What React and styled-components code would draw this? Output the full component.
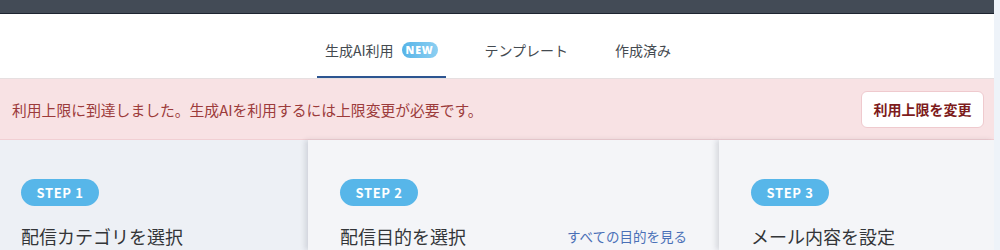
import React from 'react';
import styled, { createGlobalStyle } from 'styled-components';

const GlobalStyle = createGlobalStyle`
  html, body {
    margin: 0;
    padding: 0;
    background: #eef3f9;
    font-family: "Noto Sans CJK JP", "Noto Sans", sans-serif;
  }
  * {
    box-sizing: border-box;
  }
`;

const Page = styled.div`
  width: 994px;
  height: 250px;
  overflow: hidden;
  display: flex;
  flex-direction: column;
  background: #ffffff;
`;

const TopBar = styled.div`
  height: 14px;
  flex-shrink: 0;
  background: #434b56;
  border-bottom: 1px solid #1d2430;
`;

const TabBar = styled.nav`
  height: 65px;
  flex-shrink: 0;
  display: flex;
  justify-content: center;
  align-items: stretch;
  gap: 31px;
  background: #ffffff;
  border-bottom: 1px solid #e6dfe0;
  padding-left: 2px;
`;

const Tab = styled.div`
  display: flex;
  align-items: center;
  gap: 8px;
  padding: 10px 8px 0;
  font-size: 14px;
  color: #444a50;
  border-bottom: 2px solid ${({ $active }) => ($active ? '#2d5591' : 'transparent')};
`;

const NewBadge = styled.span`
  display: inline-flex;
  align-items: center;
  justify-content: center;
  height: 16px;
  width: 36px;
  border-radius: 8px;
  background: linear-gradient(90deg, #56b3e7, #8ccff2);
  color: #ffffff;
  font-family: "Open Sans", "Noto Sans", sans-serif;
  font-size: 10.5px;
  font-weight: 800;
  letter-spacing: 0.8px;
`;

const Alert = styled.div`
  height: 61px;
  flex-shrink: 0;
  display: flex;
  align-items: center;
  justify-content: space-between;
  padding: 0 10px 0 12px;
  background: #f8e2e4;
  border-bottom: 1px solid #f1cfd3;
`;

const AlertText = styled.p`
  margin: 0;
  font-size: 14.8px;
  color: #9c3b3b;
`;

const AlertButton = styled.button`
  height: 37px;
  width: 123px;
  border: 1px solid #efcace;
  border-radius: 6px;
  background: #ffffff;
  color: #7d1c1c;
  font-family: inherit;
  font-size: 14px;
  font-weight: 700;
  cursor: pointer;
`;

const Steps = styled.div`
  flex: 1;
  display: grid;
  grid-template-columns: 308px 411px 1fr;
  background: #f4f5f8;
`;

const StepColumn = styled.section`
  position: relative;
  z-index: ${({ $layer }) => $layer};
  background: ${({ $muted }) => ($muted ? '#edf0f5' : '#f4f5f8')};
  padding: 39px 32px 0 ${({ $muted }) => ($muted ? '21px' : '32px')};
  box-shadow: ${({ $muted }) => ($muted ? 'none' : '-3px 0 5px rgba(40, 50, 70, 0.14)')};
`;

const StepBadge = styled.span`
  display: inline-flex;
  align-items: center;
  justify-content: center;
  width: 78px;
  height: 27px;
  border-radius: 14px;
  background: #57b6e9;
  color: #ffffff;
  font-size: 13px;
  font-weight: 700;
  letter-spacing: 0.6px;
`;

const StepHeader = styled.div`
  display: flex;
  align-items: center;
  justify-content: space-between;
  margin-top: 17px;
`;

const StepTitle = styled.h2`
  margin: 0;
  font-size: 18px;
  font-weight: 400;
  color: #333538;
`;

const StepLink = styled.a`
  font-size: 13.5px;
  color: #4a70b7;
  text-decoration: none;
`;

const steps = [
  { no: 1, title: '配信カテゴリを選択', muted: true },
  { no: 2, title: '配信目的を選択', link: 'すべての目的を見る' },
  { no: 3, title: 'メール内容を設定' },
];

const App = () => (
  <>
    <GlobalStyle />
    <Page>
      <TopBar />
      <TabBar>
        <Tab $active>
          生成AI利用
          <NewBadge>NEW</NewBadge>
        </Tab>
        <Tab>テンプレート</Tab>
        <Tab>作成済み</Tab>
      </TabBar>
      <Alert>
        <AlertText>利用上限に到達しました。生成AIを利用するには上限変更が必要です。</AlertText>
        <AlertButton>利用上限を変更</AlertButton>
      </Alert>
      <Steps>
        {steps.map((step) => (
          <StepColumn key={step.no} $muted={step.muted} $layer={step.no}>
            <StepBadge>STEP {step.no}</StepBadge>
            <StepHeader>
              <StepTitle>{step.title}</StepTitle>
              {step.link && <StepLink href="#">{step.link}</StepLink>}
            </StepHeader>
          </StepColumn>
        ))}
      </Steps>
    </Page>
  </>
);

export default App;
